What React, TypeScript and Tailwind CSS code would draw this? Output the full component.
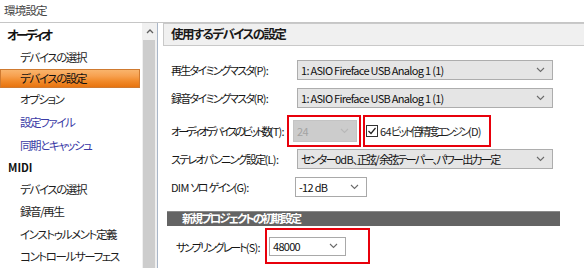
import React from 'react'

const jp = "font-['Noto_Sans_CJK_JP','Noto_Sans_CJK_SC',sans-serif] [font-feature-settings:'palt']"

// Meiryo UI is much narrower than Noto, so kana/kanji runs get tighter tracking than latin runs
function T({ s, cjk = 'tracking-[-1.7px]', lat = 'tracking-[-0.7px]' }: { s: string; cjk?: string; lat?: string }) {
  const parts = s.match(/[\x00-\x7F]+|[^\x00-\x7F]+/g) || []
  return (
    <>
      {parts.map((p, i) => (
        <span key={i} className={/^[\x00-\x7F]/.test(p) ? lat : cjk}>
          {p}
        </span>
      ))}
    </>
  )
}

function Chevron({ color = '#6b6b6b' }: { color?: string }) {
  return (
    <svg width="9" height="6" viewBox="0 0 9 6" className="shrink-0">
      <polyline points="1,1 4.5,4.5 8,1" fill="none" stroke={color} strokeWidth="1.1" />
    </svg>
  )
}

type ComboProps = {
  text: string
  w: string
  h?: string
  variant?: 'gray' | 'white' | 'disabled'
}

function Combo({ text, w, h = 'h-[20px]', variant = 'gray' }: ComboProps) {
  const look =
    variant === 'gray'
      ? 'bg-[#e5e5e5] border-[#adadad] text-[#111]'
      : variant === 'white'
        ? 'bg-white border-[#a9a9a9] text-[#111]'
        : 'bg-[#cccccc] border-[#c4c4c4] text-[#a3a3a3]'
  return (
    <div className={`${w} ${h} ${look} border flex items-center justify-between pl-[3px] pr-[7px] leading-none`}>
      <span className="whitespace-nowrap">
        <T s={text} />
      </span>
      <Chevron color={variant === 'disabled' ? '#b8b8b8' : '#6b6b6b'} />
    </div>
  )
}

function Label({ s, w, cjk }: { s: string; w: string; cjk?: string }) {
  return (
    <div className={`${w} shrink-0 pl-[11px] text-[#151515] whitespace-nowrap`}>
      <T s={s} cjk={cjk} />
    </div>
  )
}

export default function App() {
  const left = [
    { t: 'オーディオ', kind: 'head', h: 'h-[22px]' },
    { t: 'デバイスの選択', kind: 'item', h: 'h-[23px]' },
    { t: 'デバイスの設定', kind: 'sel', h: 'h-[19px]' },
    { t: 'オプション', kind: 'item', h: 'h-[23px]' },
    { t: '設定ファイル', kind: 'link', h: 'h-[23px]' },
    { t: '同期とキャッシュ', kind: 'link', h: 'h-[23px]' },
    { t: 'MIDI', kind: 'midi', h: 'h-[21px]' },
    { t: 'デバイスの選択', kind: 'item', h: 'h-[23px]' },
    { t: '録音/再生', kind: 'item', h: 'h-[22px]' },
    { t: 'インストゥルメント定義', kind: 'item', h: 'h-[23px]' },
    { t: 'コントロールサーフェス', kind: 'item', h: 'h-[22px]' },
  ]

  return (
    <div className={`w-[584px] h-[268px] overflow-hidden bg-white text-[11px] ${jp}`}>
      {/* title */}
      <div className="h-[23px] border-b border-[#c6c6c6] flex items-center pl-[4px] text-[11.5px] tracking-[-0.8px] text-[#444]">
        環境設定
      </div>

      <div className="flex h-[245px]">
        {/* tree */}
        <div className="w-[142px] shrink-0 pt-[1px] text-[11.5px]">
          {left.map((it, i) => {
            if (it.kind === 'sel') {
              return (
                <div
                  key={i}
                  className={`${it.h} w-[140px] flex items-center pl-[19px] tracking-[-1.4px] text-[#111] border border-[#cf7a30] bg-[linear-gradient(to_bottom,#f9b46c_0%,#f7a150_35%,#f18a2a_65%,#e8740f_100%)]`}
                >
                  {it.t}
                </div>
              )
            }
            const cls =
              it.kind === 'head'
                ? 'pl-[7px] font-bold text-[12.5px] text-[#111] tracking-[-2.6px]'
                : it.kind === 'midi'
                  ? 'pl-[8px] font-bold text-[11px] text-[#111] tracking-normal'
                  : it.kind === 'link'
                    ? 'pl-[20px] text-[#3b3ba6] tracking-[-1.4px]'
                    : 'pl-[20px] text-[#1e1e1e] tracking-[-1.4px]'
            return (
              <div key={i} className={`${it.h} flex items-center whitespace-nowrap ${cls}`}>
                {it.t}
              </div>
            )
          })}
        </div>

        {/* scrollbar */}
        <div className="w-[15px] shrink-0 bg-[#f0f0f0] flex flex-col">
          <div className="h-[17px] flex items-center justify-center">
            <svg width="8" height="5" viewBox="0 0 8 5">
              <polyline points="1,4 4,1 7,4" fill="none" stroke="#606060" strokeWidth="1.3" />
            </svg>
          </div>
          <div className="flex-1 ml-[1px] w-[12px] bg-[#cdcdcd]" />
        </div>
        <div className="w-px shrink-0 bg-[#a9b6c8]" />

        {/* settings */}
        <div className="flex-1 pl-[2px] flex flex-col">
          <div className="ml-[3px] h-[23px] -mr-[4px] bg-[#f0f0f0] border border-[#c9c9c9] flex items-center pl-[7px] text-[12.5px] font-bold text-[#1a1a1a] tracking-[-1.6px]">
            使用するデバイスの設定
          </div>

          <div className="mt-[14px] flex items-center">
            <Label w="w-[137px]" s="再生タイミングマスタ(P):" />
            <Combo w="w-[256px]" text="1: ASIO Fireface USB Analog 1 (1)" />
          </div>

          <div className="mt-[8px] flex items-center">
            <Label w="w-[137px]" s="録音タイミングマスタ(R):" />
            <Combo w="w-[256px]" text="1: ASIO Fireface USB Analog 1 (1)" />
          </div>

          <div className="mt-[7px] flex items-center">
            <Label w="w-[127px]" s="オーディオデバイスのビット数(T):" cjk="tracking-[-2.8px]" />
            <div className="w-[74px] h-[32px] border-2 border-[#e8000b] flex items-center pl-[4px]">
              <Combo w="w-[64px]" h="h-[22px]" variant="disabled" text="24" />
            </div>
            <div className="ml-[2px] w-[128px] h-[32px] border-2 border-[#e8000b] flex items-center pl-[1px] text-[#1e1e1e] whitespace-nowrap">
              <svg width="12" height="12" viewBox="0 0 12 12" className="shrink-0 mr-[2px]">
                <rect x="0.5" y="0.5" width="11" height="11" fill="#fff" stroke="#333" />
                <polyline points="2.5,6 5,8.5 9.5,3" fill="none" stroke="#222" strokeWidth="1.2" />
              </svg>
              <span>
                <T s="64ビット倍精度エンジン(D)" cjk="tracking-[-2.4px]" />
              </span>
            </div>
          </div>

          <div className="mt-[2px] flex items-center">
            <Label w="w-[137px]" s="ステレオパンニング設定(L):" />
            <Combo w="w-[256px]" text="センター0dB、正弦/余弦テーパー、パワー出力一定" />
          </div>

          <div className="mt-[8px] flex items-center">
            <Label w="w-[135px]" s="DIM ソロ ゲイン(G):" />
            <Combo w="w-[72px]" variant="white" text="-12 dB" />
          </div>

          <div className="mt-[14px] ml-[7px] w-[393px] h-[15px] bg-[#646464] border-t border-[#8a8a8a] flex items-center pl-[15px] text-[11.5px] font-bold text-white tracking-[-2px]">
            新規プロジェクトの初期設定
          </div>

          <div className="mt-[2px] flex items-center">
            <div className="w-[105px] shrink-0 pl-[16px] pt-[2px] text-[#151515] whitespace-nowrap">
              <T s="サンプリングレート(S):" cjk="tracking-[-2px]" />
            </div>
            <div className="w-[105px] h-[36px] border-2 border-[#e8000b] flex items-center pl-[2px]">
              <Combo w="w-[77px]" h="h-[19px]" variant="white" text="48000" />
            </div>
          </div>
        </div>
      </div>
    </div>
  )
}
